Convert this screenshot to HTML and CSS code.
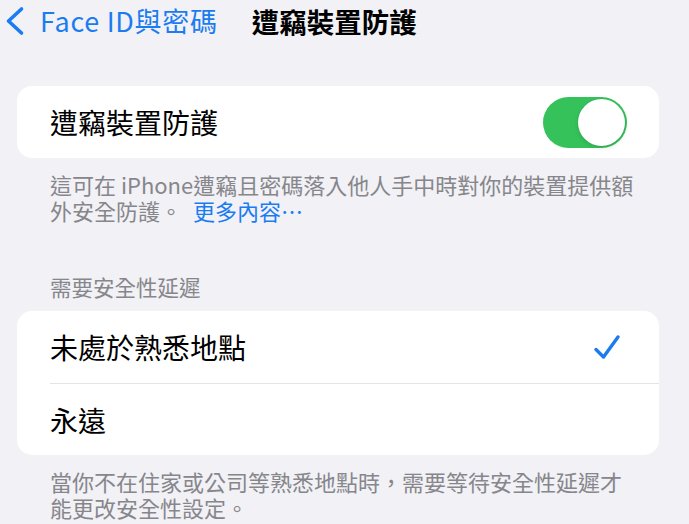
FILE: index.html
```html
<!DOCTYPE html>
<html lang="zh-Hant">
<head>
<meta charset="utf-8">
<link rel="stylesheet" href="styles.css">
</head>
<body>
<div class="screen">
  <header class="nav">
    <a class="back">
      <svg class="chev" width="22" height="30" viewBox="0 0 22 30"><path d="M17.5 3 L4.5 15 L17.5 27" fill="none" stroke="#1a7cf0" stroke-width="3.6" stroke-linecap="round" stroke-linejoin="round"/></svg>
      <span class="back-label">Face ID與密碼</span>
    </a>
    <h1 class="title">遭竊裝置防護</h1>
  </header>

  <section class="group first">
    <div class="card">
      <div class="row toggle-row">
        <span class="label">遭竊裝置防護</span>
        <span class="switch on"><span class="knob"></span></span>
      </div>
    </div>
    <p class="footnote">這可在 iPhone遭竊且密碼落入他人手中時對你的裝置提供額外安全防護。<a class="link">更多內容⋯</a></p>
  </section>

  <section class="group second">
    <h2 class="section-header">需要安全性延遲</h2>
    <div class="card">
      <div class="row check-row">
        <span class="label">未處於熟悉地點</span>
        <svg class="check" width="28" height="26" viewBox="0 0 28 26"><path d="M3 15.5 L10.5 23 L25 3" fill="none" stroke="#1a7cf0" stroke-width="3.4" stroke-linecap="round" stroke-linejoin="round"/></svg>
      </div>
      <div class="sep"></div>
      <div class="row last">
        <span class="label">永遠</span>
      </div>
    </div>
    <p class="footnote">當你不在住家或公司等熟悉地點時，需要等待安全性延遲才能更改安全性設定。</p>
  </section>
</div>
</body>
</html>
```

FILE: styles.css
```css
* { box-sizing: border-box; }
html, body {
  margin: 0;
  padding: 0;
  background: #f1f1f6;
}
body {
  width: 689px;
  height: 524px;
  overflow: hidden;
  font-family: "Noto Sans CJK TC", "Noto Sans", sans-serif;
  color: #000;
}
.screen {
  display: flex;
  flex-direction: column;
}
.nav {
  height: 42px;
  display: flex;
  align-items: center;
  padding-left: 4px;
}
.back {
  display: flex;
  align-items: center;
  gap: 14px;
  color: #1a7cf0;
}
.chev { display: block; }
.back-label {
  font-size: 27px;
  letter-spacing: 0.7px;
  line-height: 42px;
}
.title {
  margin: 0 0 0 34px;
  font-size: 27.5px;
  font-weight: 600;
  line-height: 42px;
}
.group.first { margin-top: 44px; }
.group.second { margin-top: 51px; }
.card {
  background: #fff;
  border-radius: 15px;
  margin: 0 30px 0 17px;
  overflow: hidden;
}
.row {
  height: 72px;
  display: flex;
  align-items: center;
  justify-content: space-between;
  padding: 0 32px 0 33px;
}
.row.last { height: 71px; }
.label {
  font-size: 28px;
  line-height: 36px;
}
.switch {
  width: 84px;
  height: 51px;
  border-radius: 26px;
  background: #35c25b;
  display: flex;
  align-items: center;
  justify-content: flex-end;
  padding: 2px;
}
.knob {
  width: 47px;
  height: 47px;
  border-radius: 50%;
  background: #fff;
  box-shadow: 0 2px 5px rgba(0,0,0,0.12), 0 0 1px rgba(0,0,0,0.1);
}
.check-row { padding-right: 38px; }
.check { display: block; }
.sep {
  height: 1px;
  background: #e3e3e8;
  margin-left: 33px;
}
.footnote {
  margin: 13px 48px 0 50px;
  font-size: 22px;
  line-height: 26px;
  color: #86868b;
}
.link {
  display: inline-block;
  color: #1a7cf0;
  margin-left: 11px;
  line-height: 26px;
}
.section-header {
  margin: 0 0 11px 50px;
  font-size: 21.5px;
  font-weight: 400;
  line-height: 26px;
  color: #86868b;
}
```
